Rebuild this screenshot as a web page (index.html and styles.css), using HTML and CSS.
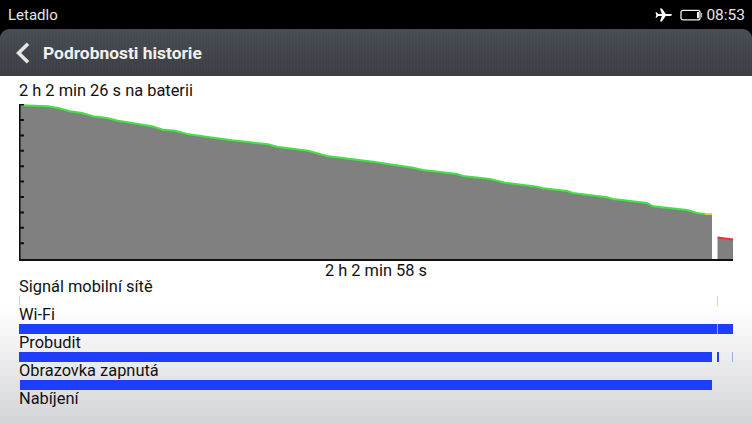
FILE: index.html
```html
<!DOCTYPE html>
<html lang="cs">

<head>
  <meta charset="UTF-8">
  <title>Podrobnosti historie</title>
  <link rel="stylesheet" href="styles.css">
</head>

<body>
  <div class="status-bar">
    <span class="carrier">Letadlo</span>
    <div class="status-right">
      <svg class="plane" width="18" height="14" viewBox="0 0 18 14">
        <path d="M0.500 4.200h1.100l1.600 1.900h3.700L5 0.600h1.900l3.900 5.500h4.300c2.500 0 2.500 1.800 0 1.800h-4.300l-3.900 5.500H5l1.900-5.500H3.200l-1.600 1.900H0.500l0.800-2.800z" fill="#fff"/>
      </svg>
      <svg class="battery" width="23" height="12" viewBox="0 0 23 12">
        <rect x="1" y="1.300" width="19" height="9.600" rx="2" fill="none" stroke="#eee" stroke-width="1.300"/>
        <rect x="17" y="3" width="2" height="6.200" fill="#eee"/>
        <rect x="20.600" y="4" width="1.600" height="4.400" fill="#aaa"/>
      </svg>
      <span class="clock">08:53</span>
    </div>
  </div>

  <header class="title-bar">
    <svg class="back" width="15" height="22" viewBox="0 0 15 22">
      <path d="M13 1.800L3.600 11l9.400 9.200" fill="none" stroke="#e4e5e6" stroke-width="3.600"/>
    </svg>
    <h1>Podrobnosti historie</h1>
  </header>

  <main class="content">
    <div class="summary">2 h 2 min 26 s na baterii</div>

    <svg class="chart" width="716" height="158" viewBox="19 104 716 158">
      <path class="area" d="M21 259V105.300L48 106.300L58 108L70 111.300L82 113L93 116.300L107 118L118 120.700L132 123L152 126.300L163 129.700L175 130.700L187 134L208 137L232 140.300L250 142.300L268 144.300L277 146.700L308 150.700L327 156L373 161.700L413 167.700L423 170L457 174L463 176L490 179L505 182.700L537 186.700L543 188.300L567 191L573 193L607 197.300L613 199L647 203L653 206.300L687 210L697 213L705 214L712 214V259Z"/>
      <path class="area" d="M717.500 259V237.500L733 239.500V259Z"/>
      <path class="line-green" d="M21 105.300L48 106.300L58 108L70 111.300L82 113L93 116.300L107 118L118 120.700L132 123L152 126.300L163 129.700L175 130.700L187 134L208 137L232 140.300L250 142.300L268 144.300L277 146.700L308 150.700L327 156L373 161.700L413 167.700L423 170L457 174L463 176L490 179L505 182.700L537 186.700L543 188.300L567 191L573 193L607 197.300L613 199L647 203L653 206.300L687 210L697 213L705 214"/>
      <path class="line-yellow" d="M705 214L712 214"/>
      <path class="line-red" d="M717.500 237.500L733 239.500"/>
      <path class="axis" d="M19.800 104V260H733"/>
      <path class="ticks" d="M20 104.500h4M20 120h4M20 135.400h4M20 150.800h4M20 166.200h4M20 181.600h4M20 197h4M20 212.400h4M20 227.800h4M20 243.200h4"/>
    </svg>
    <div class="duration">2 h 2 min 58 s</div>

    <div class="row-label">Signál mobilní sítě</div>
    <div class="track">
      <span class="seg pale" style="left: 0; width: 1px"></span>
      <span class="seg pale" style="left: 698px; width: 1px"></span>
    </div>

    <div class="row-label">Wi-Fi</div>
    <div class="track">
      <span class="seg" style="left: 0; width: 698px"></span>
      <span class="seg faint" style="left: 698px; width: 1px"></span>
      <span class="seg" style="left: 699px; width: 15px"></span>
    </div>

    <div class="row-label">Probudit</div>
    <div class="track">
      <span class="seg" style="left: 0; width: 693px"></span>
      <span class="seg" style="left: 698px; width: 2px"></span>
      <span class="seg faint" style="left: 713px; width: 1px"></span>
    </div>

    <div class="row-label">Obrazovka zapnutá</div>
    <div class="track">
      <span class="seg" style="left: 1px; width: 692px"></span>
    </div>

    <div class="row-label">Nabíjení</div>
  </main>
</body>

</html>
```

FILE: styles.css
```css
html,
body {
  margin: 0;
  height: 100%;
}

body {
  width: 752px;
  height: 423px;
  overflow: hidden;
  background: #000;
  font-family: Roboto, "Liberation Sans", sans-serif;
}

.status-bar {
  display: flex;
  justify-content: space-between;
  align-items: center;
  height: 29px;
  padding: 0 0 0 8px;
  color: #e6e6e6;
  font-size: 15px;
}

.status-right {
  display: flex;
  align-items: center;
  padding-right: 7px;
}

.plane {
  margin-right: 7px;
}

.battery {
  margin-right: 3px;
}

.clock {
  font-size: 15.500px;
}

.title-bar {
  display: flex;
  align-items: center;
  height: 47px;
  padding-left: 15px;
  border-radius: 9px 9px 0 0;
  background:
    repeating-linear-gradient(90deg, rgba(255, 255, 255, .015) 0 1px, transparent 1px 3px),
    linear-gradient(#484c53, #3b3e43);
}

.title-bar h1 {
  margin: 0 0 0 13px;
  color: #f0f0f0;
  font-size: 17.400px;
  font-weight: 700;
}

.content {
  height: 347px;
  padding-left: 19px;
  overflow: hidden;
  color: #111;
  font-size: 16.400px;
  background: linear-gradient(#fff 0, #fff 232px, #f4f4f5 262px, #d3d4d7 100%);
}

.summary {
  height: 28px;
  line-height: 30px;
}

.chart {
  display: block;
}

.area {
  fill: #808080;
}

.line-green,
.line-yellow,
.line-red,
.axis,
.ticks {
  fill: none;
  stroke-width: 2;
}

.line-green {
  stroke: #45e045;
}

.line-yellow {
  stroke: #d8d050;
}

.line-red {
  stroke: #ee2f3a;
}

.axis,
.ticks {
  stroke: #111;
}

.duration {
  height: 16px;
  line-height: 18px;
  margin-right: 19px;
  text-align: center;
}

.row-label {
  height: 18px;
  line-height: 18px;
}

.track {
  position: relative;
  height: 10px;
}

.seg {
  position: absolute;
  top: 0;
  bottom: 0;
  background: #1f3dfb;
}

.seg.pale {
  background: #dcdc90;
}

.seg.faint {
  background: #9aa8f0;
}
```
